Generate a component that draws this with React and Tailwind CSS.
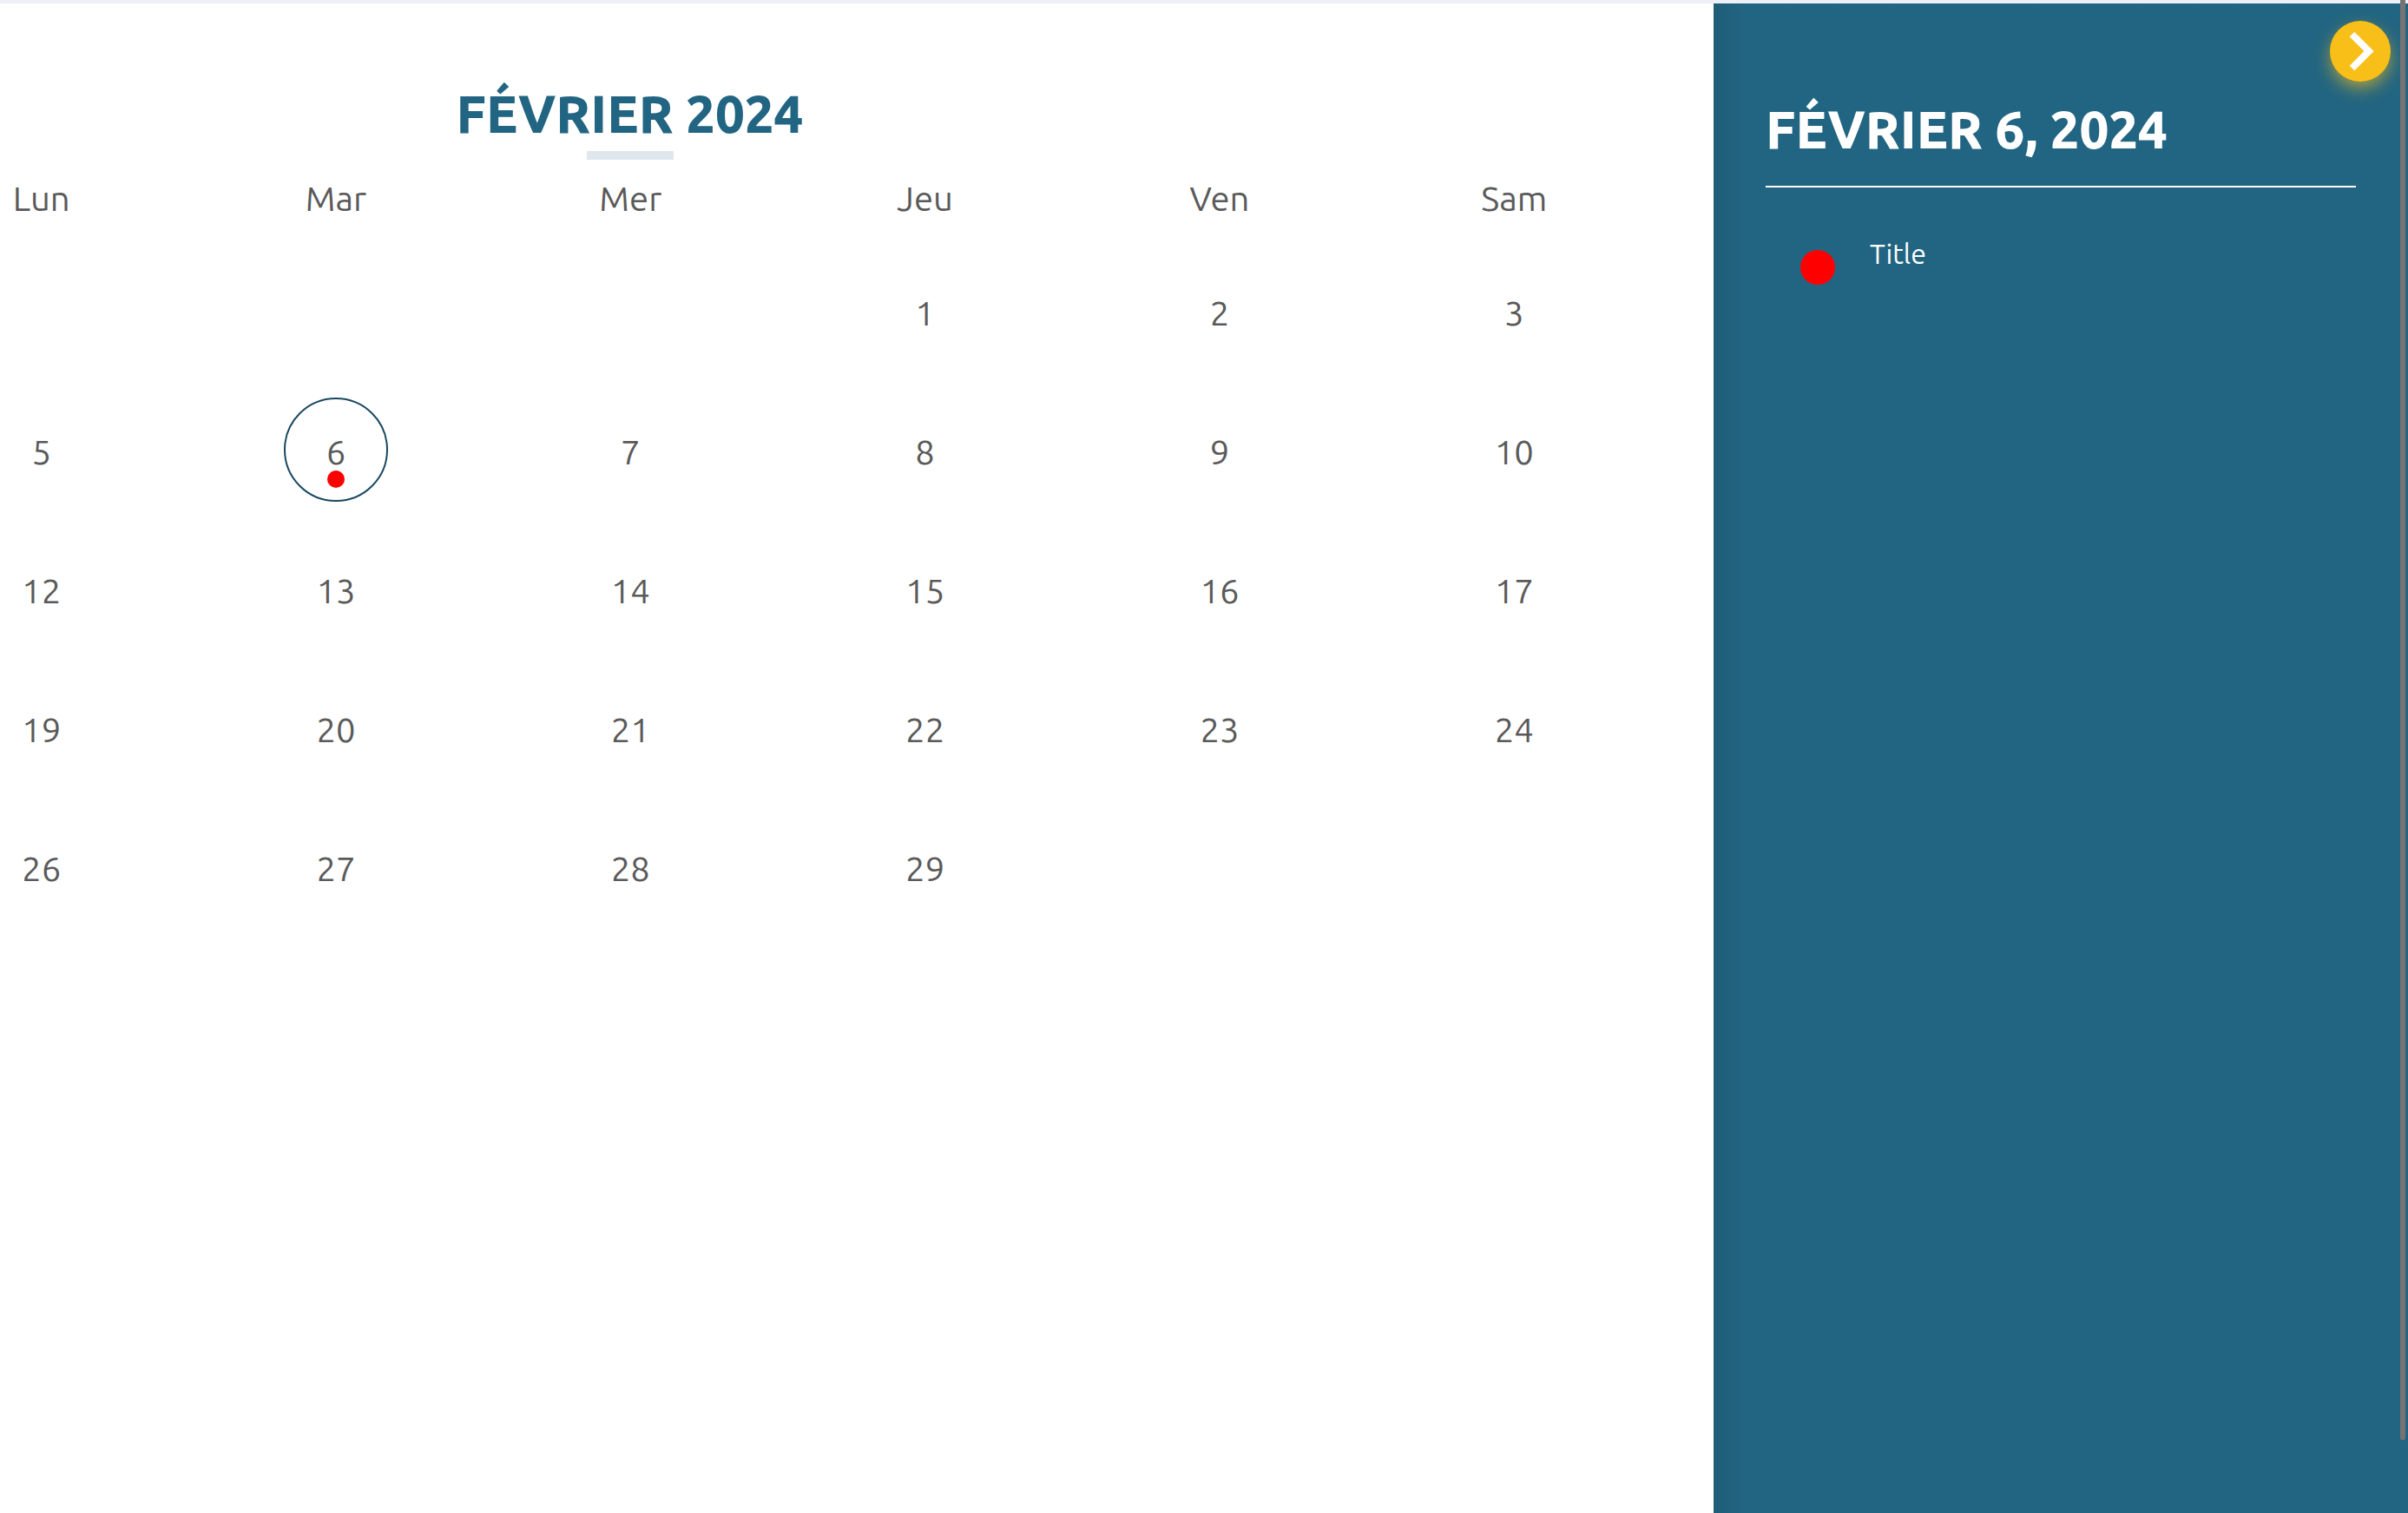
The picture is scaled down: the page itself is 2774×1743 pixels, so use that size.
import { useState } from "react";

const WEEKDAYS = ["Lun", "Mar", "Mer", "Jeu", "Ven", "Sam"];

const WEEKS = [
  [null, null, null, 1, 2, 3],
  [5, 6, 7, 8, 9, 10],
  [12, 13, 14, 15, 16, 17],
  [19, 20, 21, 22, 23, 24],
  [26, 27, 28, 29, null, null],
];

const EVENTS = { 6: [{ title: "Title" }] };

function Day({ day, selected, onSelect }) {
  return (
    <button
      type="button"
      aria-pressed={selected}
      onClick={() => onSelect(day)}
      className={`relative mx-auto flex size-[120px] cursor-pointer items-center justify-center rounded-full border-2 pt-1.5 ${
        selected ? "border-[#184860]" : "border-transparent"
      }`}
    >
      {day}
      {EVENTS[day] && (
        <span className="absolute bottom-3.5 left-1/2 size-5 -translate-x-1/2 rounded-full bg-[#ff0000]" />
      )}
    </button>
  );
}

function Calendar({ selected, onSelect }) {
  return (
    <main className="min-w-0 flex-1 overflow-hidden pt-21 pr-[60px]">
      <div className="-ml-[463px] flex flex-col items-center">
        <h1 className="text-[60px] leading-[86px] font-extrabold whitespace-nowrap text-[#226582]">FÉVRIER 2024</h1>
        <div className="h-2.5 w-[100px] bg-[#dee7ed]" />
      </div>
      <div className="-ml-[122px] pt-5">
        <table className="w-full table-fixed text-center text-[40px] leading-[50px] font-[450] text-[#5a5a5a]">
          <thead>
            <tr>
              {WEEKDAYS.map((name) => (
                <th key={name} scope="col" className="h-[74px] p-0 align-top font-[450]">
                  {name}
                </th>
              ))}
            </tr>
          </thead>
          <tbody>
            {WEEKS.map((week, i) => (
              <tr key={i}>
                {week.map((day, j) => (
                  <td key={j} className="h-40 p-0 align-middle">
                    {day && <Day day={day} selected={day === selected} onSelect={onSelect} />}
                  </td>
                ))}
              </tr>
            ))}
          </tbody>
        </table>
      </div>
    </main>
  );
}

function EventPanel({ day }) {
  const events = EVENTS[day] ?? [];
  return (
    <aside className="relative w-[800px] shrink-0 bg-linear-to-r from-[#1f5d78] to-[#226582] to-[40px] px-[60px] pt-[102px] text-white">
      <button
        type="button"
        aria-label="Fermer le panneau"
        className="absolute top-5 right-5 flex size-[70px] cursor-pointer items-center justify-center rounded-full bg-[#f8bf18] shadow-[0_8px_20px_-2px_rgba(248,191,24,0.7)]"
      >
        <svg viewBox="0 0 70 70" className="size-[70px]" fill="none" aria-hidden="true">
          <path d="M25.5 15.5 L45 35 L25.5 54.5" stroke="white" strokeWidth="8" />
        </svg>
      </button>
      <h2 className="border-b-2 border-white pb-[22px] text-[60px] leading-[86px] font-extrabold whitespace-nowrap">
        FÉVRIER {day}, 2024
      </h2>
      <ul className="pt-14">
        {events.map((event) => (
          <li key={event.title} className="flex items-start gap-10 pl-10">
            <span className="mt-4 size-10 rounded-full bg-[#ff0000]" />
            <span className="text-[32px] leading-[40px] font-[450]">{event.title}</span>
          </li>
        ))}
      </ul>
    </aside>
  );
}

export default function App() {
  const [selected, setSelected] = useState(6);
  return (
    <div className="relative flex min-h-screen flex-col overflow-hidden bg-white font-['Ubuntu','Noto_Sans',sans-serif]">
      <div className="h-1 bg-[#efeff7]" />
      <div className="flex flex-1">
        <Calendar selected={selected} onSelect={setSelected} />
        <EventPanel day={selected} />
      </div>
      <div className="absolute top-0 right-[3px] h-[1659px] w-1.5 rounded-b-full bg-[#757374]" />
    </div>
  );
}
